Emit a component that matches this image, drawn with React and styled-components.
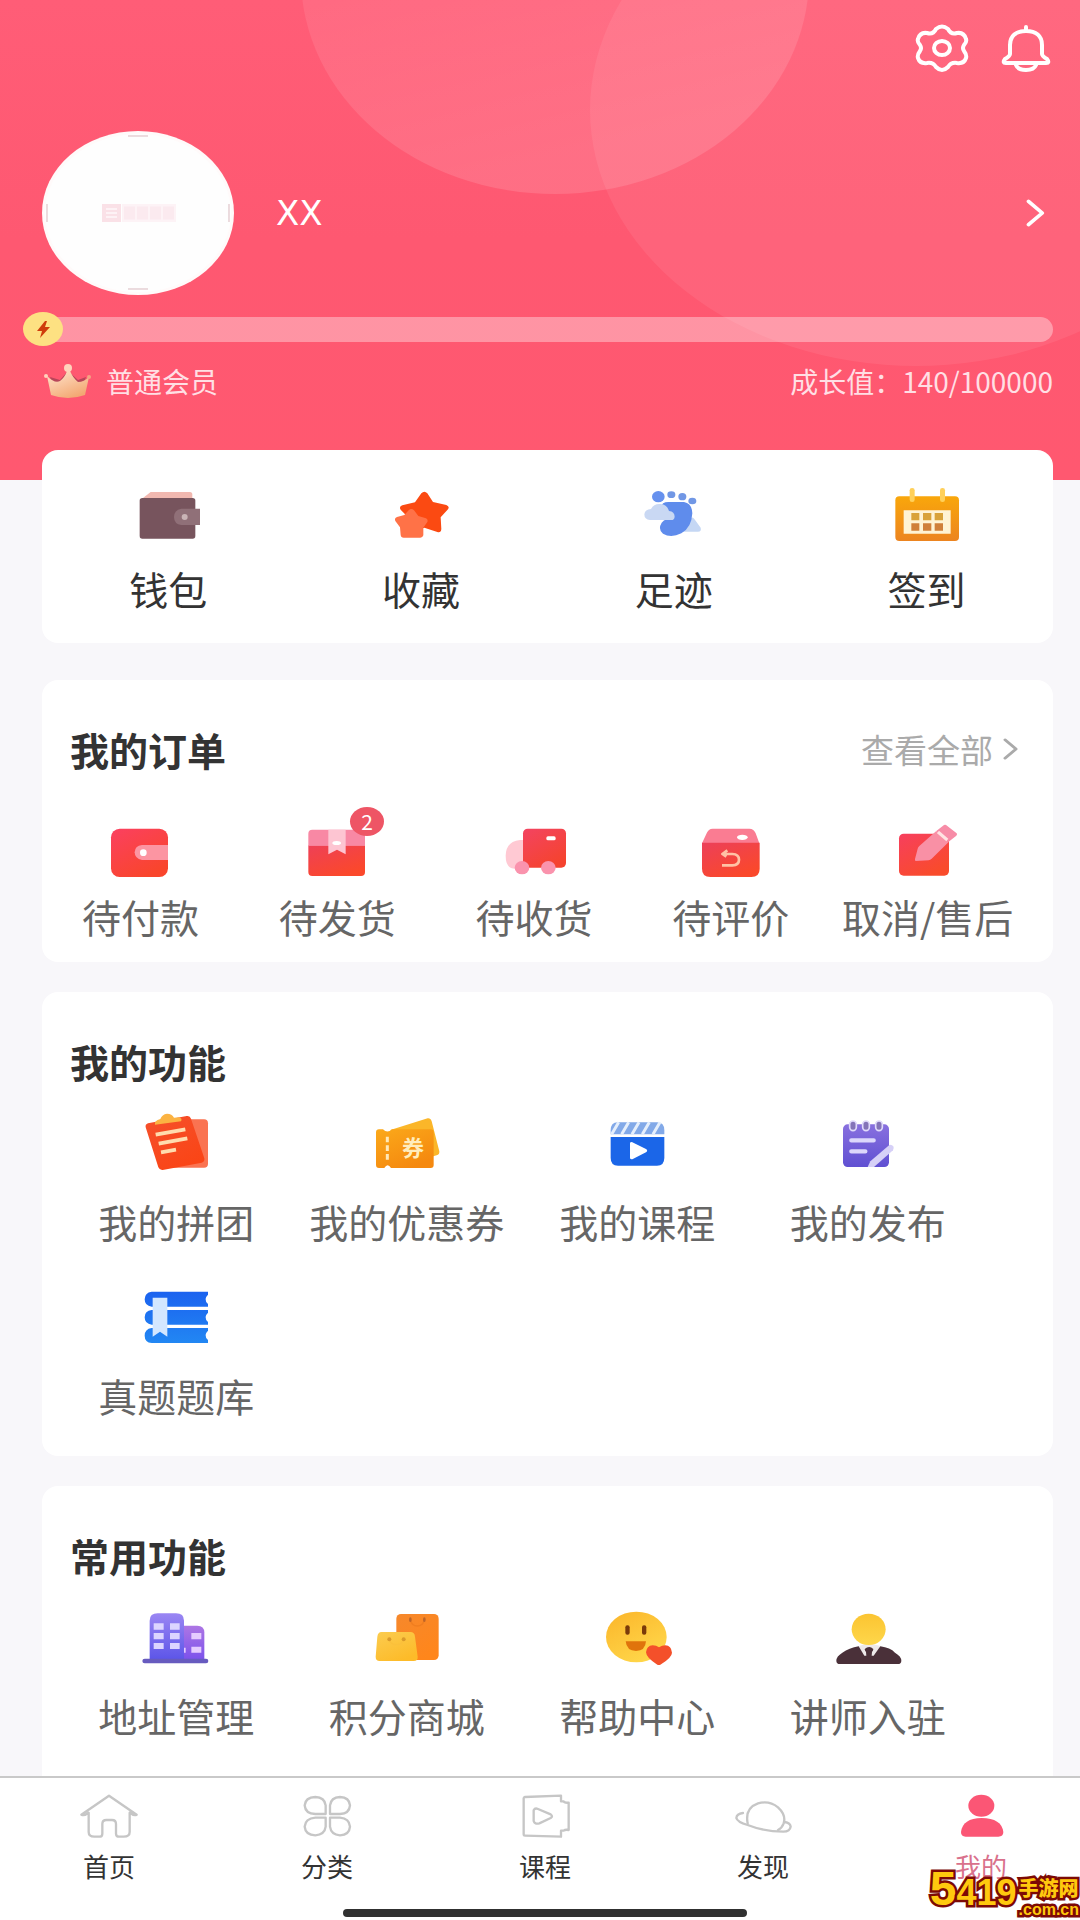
import React from "react"
import styled, { createGlobalStyle } from "styled-components"

const GlobalStyle = createGlobalStyle`
  * {
    box-sizing: border-box;
  }
  body {
    margin: 0;
    background: #f8f7fa;
    font-family: "Noto Sans CJK SC", "Noto Sans", sans-serif;
    color: #333;
  }
  a {
    color: inherit;
    text-decoration: none;
  }
  button {
    border: 0;
    padding: 0;
    background: none;
    color: inherit;
    font: inherit;
    cursor: pointer;
  }
  svg {
    display: block;
    flex: none;
  }
`

const Page = styled.div`
  min-height: 100vh;
  display: flex;
  flex-direction: column;
`

const Hero = styled.header`
  position: relative;
  overflow: hidden;
  padding: 22px 27px 80px 42px;
  background: linear-gradient(180deg, #ff5d77 0%, #fe5871 50%, #ff5870 100%);
  color: #fff;
`

const HeroArt = styled.svg`
  position: absolute;
  top: 0;
  right: 0;
`

const Actions = styled.div`
  position: relative;
  display: flex;
  justify-content: flex-end;
  gap: 32px;
  height: 52px;
`

const Profile = styled.a`
  position: relative;
  display: flex;
  align-items: center;
  margin-top: 57px;
  padding-right: 7px;
`

const Nickname = styled.span`
  flex: 1;
  margin-left: 42px;
  font-family: "DejaVu Sans", "Noto Sans CJK SC", sans-serif;
  font-size: 34px;
  line-height: 48px;
`

const Progress = styled.div`
  position: relative;
  display: flex;
  align-items: center;
  height: 34px;
  margin: 17px 0 0 -19px;
`

const Track = styled.div`
  flex: 1;
  height: 25px;
  margin-left: 16px;
  border-radius: 13px;
  background: rgba(255, 255, 255, 0.36);
`

const Thumb = styled.svg`
  position: absolute;
  top: 0;
  left: 0;
`

const Level = styled.div`
  position: relative;
  display: flex;
  align-items: center;
  height: 38px;
  margin-top: 16px;
  font-size: 28px;
  line-height: 38px;
  color: #ffdfe4;
`

const LevelName = styled.span`
  flex: 1;
  margin-left: 12px;
`

const Main = styled.main`
  position: relative;
  flex: 1;
  display: flex;
  flex-direction: column;
  gap: 30px;
  margin-top: -30px;
  padding: 0 27px 0 42px;
`

const Card = styled.section`
  border-radius: ${p => (p.$last ? "16px 16px 0 0" : "16px")};
  background: #fff;
  padding: 45px 0 ${p => p.$bottom || 37}px;
`

const Shortcuts = styled.nav`
  display: grid;
  grid-template-columns: repeat(4, 1fr);
  margin-bottom: 7px;
  padding: 36px 0 31px;
  border-radius: 16px;
  background: #fff;
`

const CardHead = styled.div`
  display: flex;
  align-items: center;
  justify-content: space-between;
  padding: 0 34px 0 28px;
`

const Title = styled.h2`
  margin: 0;
  font-size: 39px;
  font-weight: 700;
  line-height: 48px;
`

const More = styled.a`
  display: flex;
  align-items: center;
  gap: 10px;
  font-size: 33px;
  line-height: 48px;
  color: #aaa;
`

const Orders = styled.div`
  display: grid;
  grid-template-columns: repeat(5, 1fr);
  margin-top: 49px;
  padding-right: 27px;
`

const Features = styled.div`
  display: grid;
  grid-template-columns: repeat(4, 1fr);
  row-gap: 42px;
  margin-top: 28px;
  padding: 0 70px 0 19px;
`

const Item = styled.a`
  display: flex;
  flex-direction: column;
  align-items: center;
  gap: ${p => p.$gap}px;
  font-size: 39px;
  line-height: 48px;
  white-space: nowrap;
  color: ${p => (p.$dark ? "#333" : "#666")};
`

const IconBox = styled.span`
  position: relative;
`

const Badge = styled.span`
  position: absolute;
  top: -15px;
  right: -11px;
  width: 34px;
  height: 29px;
  border-radius: 50%;
  background: #ee5565;
  color: #fff;
  font-size: 21px;
  line-height: 28px;
  text-align: center;
`

const TabBar = styled.footer`
  position: sticky;
  bottom: 0;
  overflow: hidden;
  border-top: 2px solid #c9c9c9;
  background: #fff;
`

/* runs a little past the right edge of the window */
const TabInner = styled.div`
  margin-right: -10px;
  padding: 12px 0 3px;
`

const Tabs = styled.nav`
  display: grid;
  grid-template-columns: repeat(5, 1fr);
`

const Tab = styled.a`
  display: flex;
  flex-direction: column;
  align-items: center;
  gap: 6px;
  font-size: 26px;
  line-height: 32px;
  color: ${p => (p.$active ? "#d9718c" : "#333")};
`

const HomeIndicator = styled.div`
  width: 37%;
  height: 8px;
  margin: 27px auto 0;
  border-radius: 4px;
  background: #303030;
`

const SiteMark = styled.div`
  position: absolute;
  right: 1px;
  bottom: 0;
  display: flex;
  align-items: flex-end;
  gap: 2px;
  color: #ffc90e;
  font-family: "Liberation Sans", "Noto Sans CJK SC", sans-serif;
  font-weight: 900;
  -webkit-text-stroke: 5px #7d0a05;
  paint-order: stroke fill;
`

const MarkDigits = styled.span`
  display: flex;
  align-items: baseline;
  font-size: 36px;
  line-height: 54px;
`

const MarkBig = styled.span`
  font-size: 48px;
`

const MarkSite = styled.span`
  display: flex;
  flex-direction: column;
  font-size: ${p => p.$size}px;
`

const MarkName = styled.span`
  font-size: 20px;
  line-height: 22px;
`

const MarkDomain = styled.span`
  font-size: 16px;
  line-height: 20px;
`

const Gradient = ({ id, from, to, flat }) => (
  <linearGradient id={id} x1="0" y1="0" x2={flat ? "0" : "0.6"} y2="1">
    <stop offset="0" stopColor={from} />
    <stop offset="1" stopColor={to} />
  </linearGradient>
)

// every menu icon shares one 72x60 box, drawn on a grid three times as fine
const Icon = ({ at, children }) => (
  <svg width="72" height="60" viewBox={`${at} 216 180`} aria-hidden="true">
    {children}
  </svg>
)

const TabIcon = ({ at, children }) => (
  <svg
    width="64"
    height="54"
    viewBox={`${at} 192 162`}
    fill="none"
    stroke="#c6c6c6"
    strokeWidth="7"
    strokeLinecap="round"
    strokeLinejoin="round"
    aria-hidden="true"
  >
    {children}
  </svg>
)

const Chevron = ({ width, height, stroke }) => (
  <svg width={width} height={height} viewBox="0 0 16 24" preserveAspectRatio="none" aria-hidden="true">
    <path d="M2 2l11 10L2 22" fill="none" stroke="currentColor" strokeWidth={stroke} strokeLinecap="round" strokeLinejoin="round" />
  </svg>
)

const GearIcon = () => (
  <svg width="54" height="52" viewBox="0 0 54 52" fill="none" stroke="#fff" strokeWidth="4" strokeLinejoin="round" aria-hidden="true">
    <path d="M21 7Q27 2 33 7Q36 13 42 11Q49 10 51 17Q52 20 49 23Q47 26 49 29Q52 33 51 36Q49 42 42 41Q36 40 33 45Q27 51 21 45Q18 40 12 41Q5 42 3 36Q2 33 5 29Q7 26 5 23Q2 20 3 17Q5 10 12 11Q18 13 21 7Z" />
    <ellipse cx="27" cy="26" rx="8" ry="7" />
  </svg>
)

const BellIcon = () => (
  <svg width="52" height="52" viewBox="0 0 52 52" fill="none" stroke="#fff" strokeWidth="4" strokeLinecap="round" strokeLinejoin="round" aria-hidden="true">
    <path d="M25 5v3M9 32V23C9 14 15 9 25 9s16 5 16 14v9q0 2 5 5q3 4-1 4H5q-4 0-1-4q5-3 5-5Z" />
    <path d="M15 43Q17 48 25 48T35 43" />
  </svg>
)

const Avatar = () => (
  <svg width="192" height="164" viewBox="0 0 192 164" aria-hidden="true">
    <ellipse cx="96" cy="82" rx="96" ry="82" fill="#fffafa" />
    <ellipse cx="96" cy="82" rx="93" ry="79" fill="#fefefe" />
    <path d="M86 5h20M86 158h20M5 73v18M187 73v18" stroke="#d9b9bf" strokeWidth="1" />
    <path d="M60 73h19v18H60z" fill="#fae1e7" />
    <path d="M64 78h11M64 82h11M64 86h11" stroke="#fdf2f5" strokeWidth="2" />
    <path d="M80 73h54v18H80z" fill="#fdf3f6" />
    <path d="M82 82h50" stroke="#fbeaef" strokeWidth="13" strokeDasharray="11 2" />
  </svg>
)

const Crown = () => (
  <svg width="52" height="38" viewBox="0 0 52 38" aria-hidden="true">
    <defs>
      <Gradient id="crown" from="#ffe6cf" to="#f3a873" />
    </defs>
    <path d="M8 15l10 3 8-9 10 9 8-3-5 16H14z" fill="#b8465a" />
    <path d="M5 14Q13 22 18 19Q23 15 25 9h3Q31 16 36 20Q42 20 47 15L43 33Q26 39 9 33Z" fill="url(#crown)" />
    <circle cx="26" cy="6" r="4" fill="#ffd3bb" />
    <circle cx="4" cy="14" r="2" fill="#ffd3bb" />
    <circle cx="47" cy="15" r="2" fill="#f4a582" />
  </svg>
)

const shortcuts = [
  {
    label: "钱包",
    icon: (
      <Icon at="96 48">
        <path d="M152 66h118q7 0 7 8v12H126z" fill="#f1b8b0" />
        <rect x="119" y="84" width="167" height="122" rx="8" fill="#77545d" />
        <path d="M244 116h56v49h-56q-22-3-22-24t22-25z" fill="#907078" />
        <circle cx="254" cy="141" r="9" fill="#c9b4b6" />
      </Icon>
    ),
  },
  {
    label: "收藏",
    icon: (
      <Icon at="855 48">
        <path d="M964 70q9-10 18 0l17 26 40 9q11 5 5 13l-22 24 2 35q-1 12-12 9l-39-13-37 13q-11 2-12-9l3-32-25-26q-6-9 5-13l38-9z" fill="#fb4a12" />
        <path d="M926 121q8-8 16 0l13 17 23 7q7 4 4 11l-12 17v23q-2 7-9 7h-50q-8 0-9-8l-2-23-14-19q-4-9 5-12l22-6z" fill="#ff7247" />
      </Icon>
    ),
  },
  {
    label: "足迹",
    icon: (
      <Icon at="114 48">
        <path d="M248 185l23-38q6-9 12 0l19 26q3 12-8 12z" fill="#c5d7f4" />
        <path d="M183 112q2-16 22-16h47q24 4 25 34-2 43-33 60-31 15-55 1-16-13-4-33 6-7 15-10z" fill="#5f8cec" />
        <path d="M150 150q-17-1-17-17 2-15 20-16 9-17 29-15 19 2 25 21 17 2 17 17-1 10-10 10z" fill="#c9d8f3" />
        <ellipse cx="175" cy="80" rx="19" ry="17" fill="#6691ee" />
        <ellipse cx="214" cy="74" rx="12" ry="10" fill="#7197e5" />
        <ellipse cx="247" cy="80" rx="12" ry="11" fill="#7197e5" />
        <ellipse cx="277" cy="93" rx="12" ry="10" fill="#7197e5" />
      </Icon>
    ),
  },
  {
    label: "签到",
    icon: (
      <Icon at="872 48">
        <defs>
          <Gradient id="calendar" from="#f9a70b" to="#ec8420" flat />
        </defs>
        <rect x="885" y="79" width="191" height="134" rx="12" fill="url(#calendar)" />
        <rect x="928" y="54" width="15" height="42" rx="7" fill="#ffd05a" />
        <rect x="1019" y="54" width="15" height="42" rx="7" fill="#ffd05a" />
        <path d="M910 121h141v70H910z" fill="#fff3d4" />
        <path d="M933 129h24v22h-24zM968 129h25v22h-25zM1003 129h25v22h-25z" fill="#d9a23a" />
        <path d="M933 160h24v22h-24zM968 160h25v22h-25zM1003 160h25v22h-25z" fill="#d0803a" />
      </Icon>
    ),
  },
]

const orders = [
  {
    label: "待付款",
    icon: (
      <Icon at="133 96">
        <defs>
          <Gradient id="pay" from="#fb4060" to="#f9452c" />
        </defs>
        <rect x="154" y="116" width="171" height="145" rx="26" fill="url(#pay)" />
        <path d="M325 165h-78q-22 3-22 22t22 23h78z" fill="#fc95a2" />
        <circle cx="251" cy="188" r="10" fill="#fff" />
      </Icon>
    ),
  },
  {
    label: "待发货",
    badge: 2,
    icon: (
      <Icon at="724 96">
        <defs>
          <Gradient id="ship" from="#ee4057" to="#fb482b" />
        </defs>
        <path d="M746 166h170v80q0 12-12 12H758q-12 0-12-12z" fill="url(#ship)" />
        <path d="M758 119h146q12 0 12 12v36H746v-36q0-12 12-12z" fill="#f888a4" />
        <path d="M806 119h52v74l-26-14-26 14z" fill="#fdc5d2" />
        <ellipse cx="831" cy="159" rx="13" ry="6" fill="#fff" />
      </Icon>
    ),
  },
  {
    label: "待收货",
    icon: (
      <Icon at="1314 96">
        <defs>
          <Gradient id="truck" from="#f34461" to="#f5432f" />
        </defs>
        <path d="M1395 150h-15q-43 5-43 48 0 38 29 38h29z" fill="#ffc9d3" />
        <rect x="1389" y="116" width="129" height="117" rx="14" fill="url(#truck)" />
        <rect x="1459" y="139" width="28" height="12" rx="5" fill="#fff" />
        <ellipse cx="1386" cy="233" rx="22" ry="20" fill="#fa93ad" />
        <ellipse cx="1465" cy="233" rx="22" ry="20" fill="#fa93ad" />
      </Icon>
    ),
  },
  {
    label: "待评价",
    icon: (
      <Icon at="404 96">
        <defs>
          <Gradient id="review" from="#ec405a" to="#fa482b" />
        </defs>
        <path d="M457 116h110q14 0 19 14l11 30H425l14-30q5-14 18-14z" fill="#fa7c92" />
        <path d="M425 158h173v78q0 25-25 25H450q-25 0-25-25z" fill="url(#review)" />
        <ellipse cx="546" cy="142" rx="16" ry="8" fill="#fff" />
        <path d="M501 181l-15 11 12 8M486 192h30q20 1 20 17t-20 17h-31" fill="none" stroke="#ffc2a5" strokeWidth="8" strokeLinejoin="round" />
      </Icon>
    ),
  },
  {
    label: "取消/售后",
    icon: (
      <Icon at="995 96">
        <defs>
          <Gradient id="refund" from="#f73f5e" to="#f94b2b" />
        </defs>
        <rect x="1016" y="131" width="150" height="126" rx="14" fill="url(#refund)" />
        <path d="M1066 213q-3-2-2-6l8-31q1-4 5-8l50-44 38 32-51 50q-4 4-9 5z" fill="#f990a5" />
        <path d="M1127 124l24-19q5-2 9 2l29 23q3 3-1 7l-24 19z" fill="#f78ca7" />
        <path d="M1133 126l28 24" stroke="#ffe3e3" strokeWidth="9" />
      </Icon>
    ),
  },
]

const features = [
  {
    label: "我的拼团",
    icon: (
      <Icon at="240 69">
        <defs>
          <Gradient id="group" from="#f5502c" to="#fa4516" />
        </defs>
        <path d="M330 88h102q12 0 12 12v122q0 11-12 11H330z" fill="#fa7351" />
        <path d="M257 112q-2-9 7-12l116-22q10-2 13 8l40 119q2 10-8 13l-117 22q-9 1-13-8z" fill="url(#group)" />
        <path d="M285 104q-3-12 16-17 5-14 20-16 15 0 21 12l15-1q11 3 6 12z" fill="#fbb342" />
        <path d="M287 134l89-16M296 161l86-16M303 187l45-8" stroke="#ffdcae" strokeWidth="11" />
      </Icon>
    ),
  },
  {
    label: "我的优惠券",
    icon: (
      <Icon at="932 69">
        <defs>
          <Gradient id="coupon" from="#fba91a" to="#f5890f" />
        </defs>
        <path d="M990 120l112-35q9-1 12 9l23 90q1 10-8 12l-60 17z" fill="#fbb629" />
        <path d="M956 118h12q13 13 27 0h116q9 0 9 9v98q0 9-9 9H992q-10-16-20 0h-16q-9 0-9-9v-98q0-9 9-9z" fill="url(#coupon)" />
        <path d="M981 140v78" stroke="#ffe9b8" strokeWidth="9" strokeDasharray="17 9" />
        <text x="1058" y="199" textAnchor="middle" fontSize="66" fontWeight="700" fill="#ffedbd">券</text>
      </Icon>
    ),
  },
  {
    label: "我的课程",
    icon: (
      <Icon at="184 69">
        <path d="M213 141h161v62q0 24-22 24H235q-22 0-22-24z" fill="#1b66e8" />
        <path d="M234 97h118q22 0 22 24v12H213v-12q0-24 21-24z" fill="#82a9e8" />
        <path d="M216 133l21-36M246 133l21-36M277 133l21-36M308 133l21-36M340 133l21-36" stroke="#e5effc" strokeWidth="9" />
        <path d="M271 158q4-4 10 0l38 19q7 5 0 10l-38 19q-7 4-10-1z" fill="#fff" />
      </Icon>
    ),
  },
  {
    label: "我的发布",
    icon: (
      <Icon at="875 69">
        <defs>
          <Gradient id="note" from="#8870df" to="#6050d2" flat />
        </defs>
        <rect x="908" y="103" width="138" height="128" rx="14" fill="url(#note)" />
        <g fill="#8474b8" stroke="#e0dafb" strokeWidth="5">
          <rect x="928" y="93" width="20" height="29" rx="10" />
          <rect x="967" y="93" width="20" height="29" rx="10" />
          <rect x="1006" y="93" width="20" height="29" rx="10" />
        </g>
        <path d="M933 151h67M933 184h42" stroke="#dcd7fb" strokeWidth="13" strokeLinecap="round" />
        <path d="M982 231l8-17 57-49q7-2 12 4 3 6-1 12l-57 50z" fill="#d6d0f7" />
      </Icon>
    ),
  },
  {
    label: "真题题库",
    icon: (
      <Icon at="240 591">
        <defs>
          <Gradient id="books" from="#1b62ef" to="#2287f3" flat />
        </defs>
        <path d="M275 605h169v9q-15 14 0 28v8H275q-21-2-21-22t21-23zM275 660h169v8q-15 14 0 28v8H275q-21-2-21-22t21-22zM275 714h169v8q-15 14 0 28v9H275q-21-2-21-22t21-23z" fill="url(#books)" />
        <path d="M278 623h44v117l-22-15-22 15z" fill="#d3e7ff" />
      </Icon>
    ),
  },
]

const common = [
  {
    label: "地址管理",
    icon: (
      <Icon at="240 51">
        <defs>
          <Gradient id="tower" from="#9a86f3" to="#5b54e8" flat />
          <Gradient id="annex" from="#ad76e4" to="#7a50ec" flat />
        </defs>
        <path d="M365 107h47q21 1 21 20v86h-68z" fill="url(#annex)" />
        <path d="M269 212V92q0-22 24-22h55q24 0 24 22v120z" fill="url(#tower)" />
        <path d="M281 100h30v19h-30zM330 100h29v19h-29zM281 129h30v19h-30zM330 129h29v19h-29zM281 159h30v18h-30zM330 159h29v18h-29z" fill="#dcd5ff" />
        <path d="M394 129h30v19h-30zM394 170h30v18h-30zM372 173h5v15h-5z" fill="#e5cbff" />
        <rect x="247" y="206" width="198" height="14" rx="7" fill="#675bbf" />
      </Icon>
    ),
  },
  {
    label: "积分商城",
    icon: (
      <Icon at="932 51">
        <defs>
          <Gradient id="bag" from="#f6882c" to="#ff861b" />
          <Gradient id="bagSmall" from="#fbcc50" to="#fdbb29" />
        </defs>
        <rect x="1008" y="72" width="127" height="138" rx="14" fill="url(#bag)" />
        <path d="M1050 90q4 18 21 18t21-18" fill="none" stroke="#f07e20" strokeWidth="4" />
        <ellipse cx="1050" cy="89" rx="4" ry="7" fill="#bd6428" />
        <ellipse cx="1092" cy="89" rx="4" ry="7" fill="#bd6428" />
        <path d="M963 126h87q13 0 14 14l8 60q1 13-12 13H958q-12 0-12-13l5-60q2-14 12-14z" fill="url(#bagSmall)" />
        <path d="M987 148q3 16 21 16t22-16" fill="none" stroke="#fac03c" strokeWidth="4" />
        <circle cx="987" cy="148" r="6" fill="#d99a2b" />
        <circle cx="1030" cy="148" r="6" fill="#d99a2b" />
      </Icon>
    ),
  },
  {
    label: "帮助中心",
    icon: (
      <Icon at="184 51">
        <defs>
          <Gradient id="face" from="#fbb52a" to="#ffd649" />
        </defs>
        <ellipse cx="290" cy="141" rx="91" ry="76" fill="url(#face)" />
        <rect x="257" y="106" width="13" height="28" rx="6" fill="#7a3a0a" />
        <rect x="307" y="106" width="13" height="28" rx="6" fill="#7a3a0a" />
        <path d="M258 154h61q-2 29-30 29t-31-29z" fill="#e0740c" />
        <path d="M358 172q9-6 19-6 18 1 20 22 0 15-35 36-5 2-9 0-33-20-34-37 2-20 20-21 11 0 19 6z" fill="#f4502a" />
      </Icon>
    ),
  },
  {
    label: "讲师入驻",
    icon: (
      <Icon at="875 51">
        <defs>
          <Gradient id="head" from="#fbc431" to="#fed74b" flat />
        </defs>
        <path d="M955 168l32-8 33 8-15 34h-34z" fill="#eee9ea" />
        <ellipse cx="985" cy="118" rx="51" ry="47" fill="url(#head)" />
        <path d="M888 212q0-13 18-24 20-14 49-19l17 28h6l-1-11q-4-4-4-9 14-12 26 0 0 5-4 9l-1 11h6l20-28q30 4 44 19 19 11 19 24 0 10-11 10H899q-11 0-11-10z" fill="#4a3039" />
      </Icon>
    ),
  },
]

const tabs = [
  {
    label: "首页",
    icon: (
      <TabIcon at="231 90">
        <path d="M327 107l-83 57q9 5 22-6v58q0 14 17 14h15q9 0 9-9v-29q0-12 12-12h17q12 0 12 12v29q0 9 10 9h13q18 0 18-14v-58q13 11 21 6z" />
      </TabIcon>
    ),
  },
  {
    label: "分类",
    icon: (
      <TabIcon at="885 90">
        <path d="M977 162V136q-3-24-31-25-30 1-32 25 2 25 32 26zM990 162V136q3-24 30-25 28 1 30 25-2 25-30 26zM977 173v27q-3 24-31 26-30-1-32-26 2-25 32-27zM990 173v27q3 24 30 26 28-1 30-26-2-25-30-27z" />
      </TabIcon>
    ),
  },
  {
    label: "课程",
    icon: (
      <TabIcon at="1539 90">
        <path d="M1571 115q0-3 4-4l108-4v17h8q1 5 15 4v82q-10-2-15 2h-8v18l-108-3q-4 0-4-4z" />
        <path d="M1601 151q4-8 13-4l38 16q8 6 0 11l-34 16q-14 4-17-7z" />
      </TabIcon>
    ),
  },
  {
    label: "发现",
    icon: (
      <TabIcon at="393 90">
        <path d="M443 190q-9-46 31-60 34-9 60 12 25 23 17 48-5 14-17 20" />
        <path d="M429 159q-19 2-20 15 3 12 34 21 51 20 107 20 20 0 22-15-1-11-18-14" />
      </TabIcon>
    ),
  },
  {
    label: "我的",
    active: true,
    icon: (
      <TabIcon at="1047 90">
        <g fill="#fb5675" stroke="none">
          <ellipse cx="1144" cy="137" rx="39" ry="33" />
          <path d="M1083 216q5-41 62-42 60 1 65 42 0 14-15 14h-98q-14 0-14-14z" />
        </g>
      </TabIcon>
    ),
  },
]

const MenuItem = ({ item, gap, dark }) => (
  <Item href="#" $gap={gap} $dark={dark}>
    <IconBox>
      {item.icon}
      {item.badge && <Badge>{item.badge}</Badge>}
    </IconBox>
    <span>{item.label}</span>
  </Item>
)

const App = () => (
  <Page>
    <GlobalStyle />
    <Hero>
      <HeroArt width="1080" height="480" viewBox="0 0 1080 480" aria-hidden="true">
        <defs>
          <linearGradient id="bubble" x1="0" y1="0" x2="0.3" y2="1">
            <stop offset="0" stopColor="#fff" stopOpacity="0.03" />
            <stop offset="1" stopColor="#fff" stopOpacity="0.13" />
          </linearGradient>
        </defs>
        <ellipse cx="555" cy="-23" rx="254" ry="217" fill="url(#bubble)" />
        <ellipse cx="916" cy="110" rx="326" ry="256" fill="#fff" fillOpacity="0.07" />
      </HeroArt>
      <Actions>
        <button type="button" aria-label="设置">
          <GearIcon />
        </button>
        <button type="button" aria-label="消息">
          <BellIcon />
        </button>
      </Actions>
      <Profile href="#">
        <Avatar />
        <Nickname>XX</Nickname>
        <Chevron width={20} height={28} stroke={3} />
      </Profile>
      <Progress role="progressbar" aria-label="成长值" aria-valuenow={140} aria-valuemax={100000}>
        <Track />
        <Thumb width="40" height="34" viewBox="0 0 40 34" aria-hidden="true">
          <ellipse cx="20" cy="17" rx="20" ry="17" fill="#fde182" />
          <path d="M22 9l-8 10h5l-2 7 10-11h-5l2-6z" fill="#cf3d0c" />
        </Thumb>
      </Progress>
      <Level>
        <Crown />
        <LevelName>普通会员</LevelName>
        <span>成长值：140/100000</span>
      </Level>
    </Hero>

    <Main>
      <Shortcuts>
        {shortcuts.map(item => (
          <MenuItem key={item.label} item={item} gap={18} dark />
        ))}
      </Shortcuts>

      <Card $bottom={22}>
        <CardHead>
          <Title>我的订单</Title>
          <More href="#">
            查看全部
            <Chevron width={16} height={22} stroke={3} />
          </More>
        </CardHead>
        <Orders>
          {orders.map(item => (
            <MenuItem key={item.label} item={item} gap={10} />
          ))}
        </Orders>
      </Card>

      <Card>
        <CardHead>
          <Title>我的功能</Title>
        </CardHead>
        <Features>
          {features.map(item => (
            <MenuItem key={item.label} item={item} gap={24} />
          ))}
        </Features>
      </Card>

      <Card $last>
        <CardHead>
          <Title>常用功能</Title>
        </CardHead>
        <Features>
          {common.map(item => (
            <MenuItem key={item.label} item={item} gap={24} />
          ))}
        </Features>
      </Card>
    </Main>

    <TabBar>
      <TabInner>
        <Tabs>
          {tabs.map(tab => (
            <Tab key={tab.label} href="#" $active={tab.active}>
              {tab.icon}
              {tab.label}
            </Tab>
          ))}
        </Tabs>
        <HomeIndicator />
      </TabInner>
      <SiteMark>
        <MarkDigits>
          <MarkBig>5</MarkBig>419
        </MarkDigits>
        <MarkSite>
          <MarkName>手游网</MarkName>
          <MarkDomain>.com.cn</MarkDomain>
        </MarkSite>
      </SiteMark>
    </TabBar>
  </Page>
)

export default App
